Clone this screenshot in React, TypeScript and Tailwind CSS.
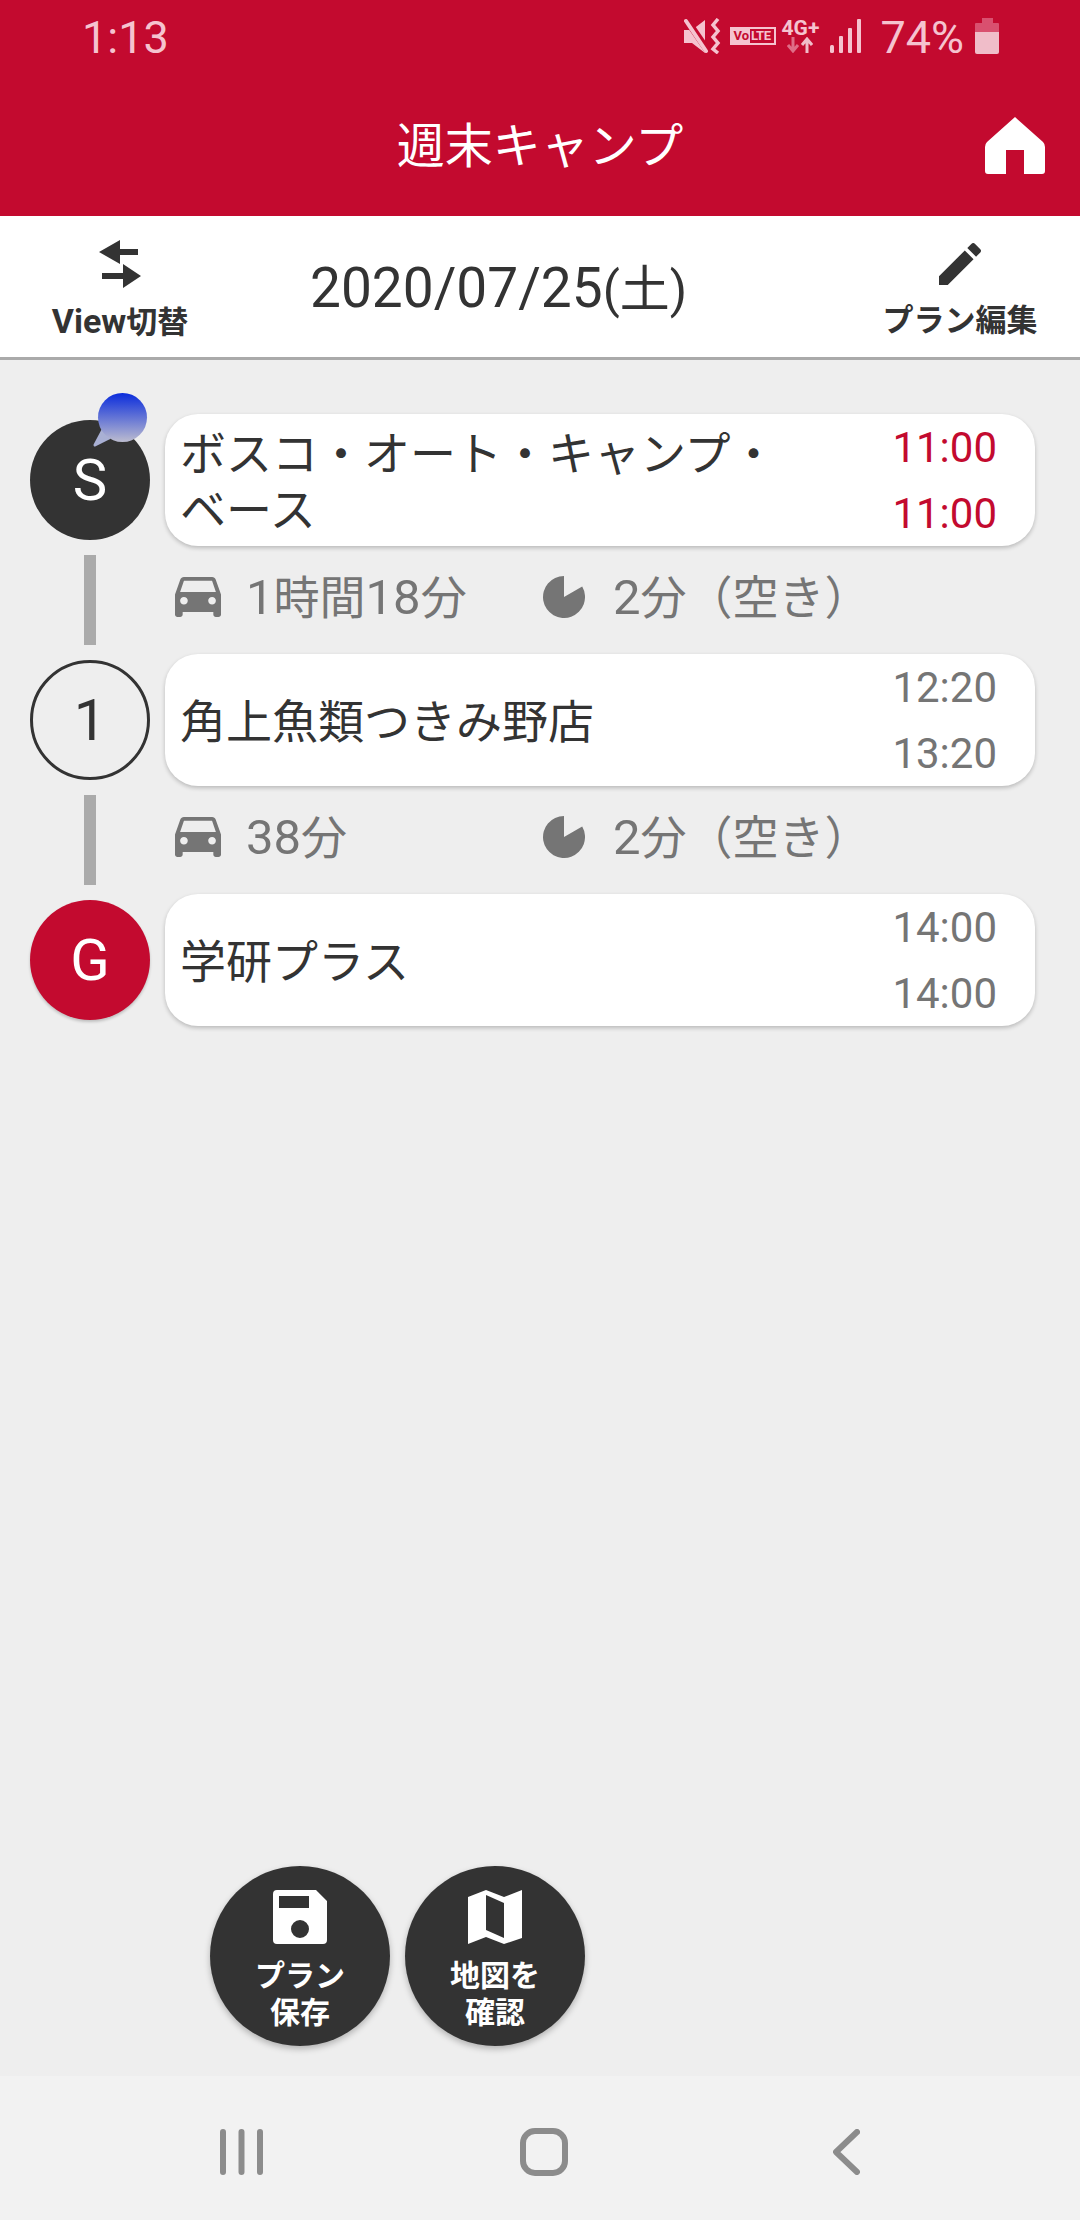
import React from 'react';

function MuteIcon() {
  return (
    <svg width="37" height="36" viewBox="0 0 37 36" className="shrink-0">
      <path d="M0 12H8L21 2V35L8 25H0Z" fill="#f5c3cf" />
      <path d="M2 1L24 33" stroke="#c30a2f" strokeWidth="7" />
      <path d="M2 3L22 33" stroke="#f5c3cf" strokeWidth="4" strokeLinecap="round" />
      <path d="M34 1L29 7L34 13L29 19L34 25L29 31L34 35" stroke="#f5c3cf" strokeWidth="3.5" fill="none" />
    </svg>
  );
}

function SignalIcon() {
  return (
    <svg width="32" height="34" viewBox="0 0 32 34" className="shrink-0">
      <rect x="0" y="26" width="4" height="8" rx="1.5" fill="#f5c3cf" />
      <rect x="9" y="17" width="4" height="17" rx="1" fill="#f5c3cf" />
      <rect x="18" y="9" width="4" height="25" rx="1" fill="#f5c3cf" />
      <rect x="27" y="0" width="4" height="34" rx="1" fill="#f5c3cf" />
    </svg>
  );
}

function BatteryIcon() {
  return (
    <svg width="24" height="36" viewBox="0 0 24 36" className="shrink-0">
      <path d="M7 0H18V5H23A1 1 0 0 1 24 6V14H0V6A1 1 0 0 1 1 5H7Z" fill="#d9506f" />
      <path d="M0 14H24V34A2 2 0 0 1 22 36H2A2 2 0 0 1 0 34Z" fill="#f0bdc9" />
    </svg>
  );
}

function HomeIcon() {
  return (
    <svg width="60" height="57" viewBox="0 0 60 57">
      <path
        d="M30 0L58 25Q60 27 60 30V54Q60 57 57 57H39V33H21V57H3Q0 57 0 54V30Q0 27 2 25Z"
        fill="#fff"
      />
    </svg>
  );
}

function SwapIcon() {
  return (
    <svg width="42" height="48" viewBox="0 0 42 48">
      <path d="M0 12L21 0V9H39V15H21V24Z" fill="#333" />
      <path d="M3 33H24V24L42 36L24 48V39H3Z" fill="#333" />
    </svg>
  );
}

function PencilIcon() {
  return (
    <svg width="42" height="42" viewBox="3 3 18 18">
      <path
        d="M3 17.25V21h3.75L17.81 9.94l-3.75-3.75L3 17.25zM20.71 7.04c.39-.39.39-1.02 0-1.41l-2.34-2.34c-.39-.39-1.02-.39-1.41 0l-1.83 1.83 3.75 3.75 1.83-1.83z"
        fill="#333"
      />
    </svg>
  );
}

function CarIcon() {
  return (
    <svg width="46" height="40" viewBox="3 5 18 16" preserveAspectRatio="none" className="shrink-0">
      <path
        d="M18.92 6.01C18.72 5.42 18.16 5 17.5 5h-11c-.66 0-1.21.42-1.42 1.01L3 12v8c0 .55.45 1 1 1h1c.55 0 1-.45 1-1v-1h12v1c0 .55.45 1 1 1h1c.55 0 1-.45 1-1v-8l-2.08-5.99zM6.5 16c-.83 0-1.5-.67-1.5-1.5S5.67 13 6.5 13s1.5.67 1.5 1.5S7.33 16 6.5 16zm11 0c-.83 0-1.5-.67-1.5-1.5s.67-1.5 1.5-1.5 1.5.67 1.5 1.5-.67 1.5-1.5 1.5zM5 11l1.5-4.5h11L19 11H5z"
        fill="#757575"
      />
    </svg>
  );
}

function PieIcon() {
  return (
    <svg width="42" height="42" viewBox="0 0 42 42" className="shrink-0">
      <path d="M21 21L39.2 10.5A21 21 0 1 1 21 0Z" fill="#757575" />
    </svg>
  );
}

function SaveIcon() {
  return (
    <svg width="54" height="54" viewBox="0 0 54 54">
      <path
        d="M4 0H43L54 11V50A4 4 0 0 1 50 54H4A4 4 0 0 1 0 50V4A4 4 0 0 1 4 0ZM6 6V18H36V6ZM27 30A9 9 0 1 0 27 48A9 9 0 1 0 27 30Z"
        fill="#fff"
        fillRule="evenodd"
      />
    </svg>
  );
}

function MapIcon() {
  return (
    <svg width="54" height="54" viewBox="0 0 54 54">
      <path
        d="M0 7L18 0L36 7L54 0V48L36 54L18 47L0 54ZM18 5V40L36 48V13Z"
        fill="#fff"
        fillRule="evenodd"
      />
    </svg>
  );
}

function Bubble() {
  return (
    <svg width="60" height="60" viewBox="0 0 60 60" className="absolute left-[62px] top-[-27px]">
      <defs>
        <linearGradient id="bubble" x1="0" y1="0" x2="0" y2="1">
          <stop offset="0" stopColor="#0a2cdc" />
          <stop offset="1" stopColor="#bcbccf" />
        </linearGradient>
      </defs>
      <path d="M3 52L11 37L17 45Z" fill="#a9b0d4" stroke="#a9b0d4" strokeWidth="3" strokeLinejoin="round" />
      <circle cx="30.5" cy="24.5" r="24.5" fill="url(#bubble)" />
    </svg>
  );
}

function StatusBar() {
  return (
    <div className="flex h-[72px] items-center pl-[82px] pr-[81px] text-[#f5c3cf]">
      <span className="pt-[2px] text-[45px] leading-none">1:13</span>
      <div className="ml-auto flex items-center">
        <MuteIcon />
        <div className="ml-[9px] flex h-[18px] w-[46px] items-stretch border-2 border-[#f5c3cf] text-[13px] font-bold leading-[14px]">
          <span className="bg-[#f5c3cf] pl-[1px] pr-[1px] text-[#c30a2f]">Vo</span>
          <span className="pl-[1px] tracking-[-0.5px]">LTE</span>
        </div>
        <div className="ml-[6px] flex w-[36px] flex-col items-center">
          <span className="text-[21px] font-bold leading-[18px]">4G+</span>
          <svg width="26" height="16" viewBox="0 0 26 16">
            <path d="M6 0V12M1 8L6 14L11 8" stroke="#df6d87" strokeWidth="3" fill="none" />
            <path d="M20 16V3M15 8L20 2L25 8" stroke="#f0bdc9" strokeWidth="3" fill="none" />
          </svg>
        </div>
        <div className="ml-[12px]">
          <SignalIcon />
        </div>
        <span className="ml-[18px] pt-[2px] text-[45px] leading-none">74%</span>
        <div className="ml-[11px]">
          <BatteryIcon />
        </div>
      </div>
    </div>
  );
}

function TitleBar() {
  return (
    <div className="grid h-[144px] grid-cols-[1fr_auto_1fr] items-center text-white">
      <div />
      <h1 className="pt-[5px] text-[48px] font-normal leading-none">週末キャンプ</h1>
      <div className="flex justify-end pr-[35px] pt-[3px]">
        <HomeIcon />
      </div>
    </div>
  );
}

function ToolButton({ icon, children }: { icon: React.ReactNode; children: React.ReactNode }) {
  return (
    <div className="flex w-[240px] flex-col items-center pt-[23px]">
      <div className="flex h-[50px] items-center justify-center">{icon}</div>
      <span className="mt-[12px] text-[31px] font-bold leading-[40px] text-[#333]">{children}</span>
    </div>
  );
}

function Marker({ kind, children }: { kind: 'start' | 'via' | 'goal'; children: React.ReactNode }) {
  const color =
    kind === 'start'
      ? 'bg-[#333] text-white'
      : kind === 'goal'
        ? 'bg-[#c30a2f] text-white shadow-[0_2px_3px_rgba(0,0,0,0.2)]'
        : 'border-[3px] border-[#333] text-[#333]';
  return (
    <div
      className={`relative flex h-[120px] w-[120px] shrink-0 items-center justify-center rounded-full text-[58px] leading-none ${color}`}
    >
      {children}
      {kind === 'start' && <Bubble />}
    </div>
  );
}

function Stop({
  kind,
  mark,
  name,
  arrive,
  leave,
}: {
  kind: 'start' | 'via' | 'goal';
  mark: string;
  name: string;
  arrive: string;
  leave: string;
}) {
  return (
    <div className="flex items-center pl-[30px]">
      <Marker kind={kind}>{mark}</Marker>
      <div className="ml-[15px] flex h-[132px] w-[870px] items-center rounded-[33px] bg-white pl-[15px] pr-[38px] shadow-[0_2px_4px_rgba(0,0,0,0.22)]">
        <div className="w-[620px] pt-[3px] text-[46px] leading-[56px] text-[#333]">{name}</div>
        <div
          className={`ml-auto flex flex-col pt-[2px] text-[42px] leading-[66px] ${kind === 'start' ? 'text-[#c30a2f]' : 'text-[#757575]'}`}
        >
          <span>{arrive}</span>
          <span>{leave}</span>
        </div>
      </div>
    </div>
  );
}

function Leg({ duration }: { duration: React.ReactNode }) {
  return (
    <div className="flex h-[108px] pl-[84px]">
      <div className="mt-[9px] h-[90px] w-[12px] bg-[#aaa]" />
      <div className="flex h-[102px] items-center text-[46px] leading-none text-[#757575]">
        <div className="ml-[79px] flex w-[368px] items-center">
          <CarIcon />
          <span className="ml-[25px] pt-[1px]">{duration}</span>
        </div>
        <PieIcon />
        <span className="ml-[28px] pt-[1px]">
          <span className="text-[49px]">2</span>分（空き）
        </span>
      </div>
    </div>
  );
}

function Fab({ icon, top, bottom }: { icon: React.ReactNode; top: string; bottom: string }) {
  return (
    <div className="flex h-[180px] w-[180px] flex-col items-center rounded-full bg-[#333] pt-[24px] text-white shadow-[0_3px_6px_rgba(0,0,0,0.25)]">
      {icon}
      <span className="mt-[13px] text-[30px] font-bold leading-[37px]">{top}</span>
      <span className="text-[30px] font-bold leading-[37px]">{bottom}</span>
    </div>
  );
}

function NavBar() {
  return (
    <div className="flex h-[144px] items-center bg-[#f2f2f2] pl-[220px] pt-[7px]">
      <svg width="43" height="46" viewBox="0 0 43 46">
        <path d="M3 3V43M21.5 3V43M40 3V43" stroke="#8c8c8c" strokeWidth="6" strokeLinecap="round" />
      </svg>
      <div className="ml-[257px] h-[48px] w-[48px] rounded-[15px] border-[6px] border-[#8c8c8c]" />
      <svg width="27" height="46" viewBox="0 0 27 46" className="ml-[265px]">
        <path d="M24 3L3 23L24 43" stroke="#8c8c8c" strokeWidth="6" strokeLinecap="round" strokeLinejoin="round" fill="none" />
      </svg>
    </div>
  );
}

export default function App() {
  return (
    <div className="flex h-[2220px] w-[1080px] flex-col overflow-hidden bg-[#eeeeee] font-[family-name:Roboto,'Noto_Sans_CJK_JP',sans-serif]">
      <header className="bg-[#c30a2f]">
        <StatusBar />
        <TitleBar />
      </header>

      <div className="flex h-[144px] border-b-[3px] border-[#aaa] bg-white">
        <ToolButton icon={<SwapIcon />}>
          <span className="text-[34px]">View</span>切替
        </ToolButton>
        <div className="flex items-center pl-[70px] pt-[3px] text-[55px] leading-none text-[#333]">
          <span>
            2020/07/25<span className="text-[50px]">(土)</span>
          </span>
        </div>
        <div className="ml-auto">
          <ToolButton icon={<PencilIcon />}>プラン編集</ToolButton>
        </div>
      </div>

      <main className="flex flex-1 flex-col pb-[30px] pt-[54px]">
        <Stop kind="start" mark="S" name="ボスコ・オート・キャンプ・ベース" arrive="11:00" leave="11:00" />
        <Leg
          duration={
            <>
              <span className="text-[49px]">1</span>時間<span className="text-[49px]">18</span>分
            </>
          }
        />
        <Stop kind="via" mark="1" name="角上魚類つきみ野店" arrive="12:20" leave="13:20" />
        <Leg
          duration={
            <>
              <span className="text-[49px]">38</span>分
            </>
          }
        />
        <Stop kind="goal" mark="G" name="学研プラス" arrive="14:00" leave="14:00" />

        <div className="mt-auto flex gap-[15px] pl-[210px]">
          <Fab icon={<SaveIcon />} top="プラン" bottom="保存" />
          <Fab icon={<MapIcon />} top="地図を" bottom="確認" />
        </div>
      </main>

      <NavBar />
    </div>
  );
}
